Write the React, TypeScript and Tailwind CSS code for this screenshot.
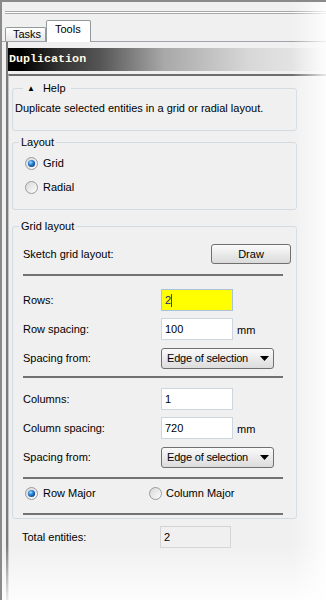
import React from "react"

function Radio({ checked }: { checked?: boolean }) {
  return (
    <svg width="13" height="13" viewBox="0 0 13 13" className="shrink-0">
      <defs>
        <linearGradient id="radioFill" x1="0" y1="0" x2="1" y2="1">
          <stop offset="0" stopColor="#d6d6d6" />
          <stop offset="1" stopColor="#ffffff" />
        </linearGradient>
        <radialGradient id="radioDot" cx="0.38" cy="0.35" r="0.7">
          <stop offset="0" stopColor="#a6dcff" />
          <stop offset="0.45" stopColor="#2f86d8" />
          <stop offset="1" stopColor="#0c3f86" />
        </radialGradient>
      </defs>
      <circle cx="6.5" cy="6.5" r="6" fill="url(#radioFill)" stroke="#9a9a9a" />
      {checked && <circle cx="6.5" cy="6.5" r="3.6" fill="url(#radioDot)" />}
    </svg>
  )
}

function Arrow() {
  return (
    <svg width="9" height="5" viewBox="0 0 9 5">
      <polygon points="0,0 9,0 4.5,5" fill="#000" />
    </svg>
  )
}

function Select() {
  return (
    <div className="w-[113px] h-[21px] rounded-[3px] border border-[#707070] bg-linear-to-b from-[#fafafa] to-[#dcdcdc] flex items-center justify-between pl-[5px] pr-[4px]">
      <span className="tracking-[-0.2px]">Edge of selection</span>
      <Arrow />
    </div>
  )
}

function TextBox({ value, yellow }: { value: string; yellow?: boolean }) {
  return (
    <div
      className={
        yellow
          ? "w-[72px] h-[22px] border border-[#aac3dc] bg-[#ffff00] flex items-center pl-[3px]"
          : "w-[72px] h-[22px] border border-[#cdd6df] bg-white flex items-center pl-[3px]"
      }
    >
      {yellow ? (
        <span className="flex items-center text-[#1b1b80]">
          {value}
          <span className="w-px h-[13px] bg-[#2040c0]" />
        </span>
      ) : (
        value
      )}
    </div>
  )
}

function Row({ label, children }: { label: string; children: React.ReactNode }) {
  return (
    <div className="flex items-center h-[22px]">
      <span className="w-[138px]">{label}</span>
      {children}
    </div>
  )
}

const Sep = () => <div className="w-[260px] h-[2px] bg-[#727272]" />

export default function App() {
  return (
    <div className="relative w-[326px] h-[600px] overflow-hidden bg-[#f0f0f0] border-l-2 border-t-2 border-[#8a8a8a] flex flex-col text-[11px] leading-[13px] text-black font-['Liberation_Sans',Arial,sans-serif]">
      {/* tab strip */}
      <div className="h-[40px] flex flex-col border-b border-[#a0a4a8]">
        <div className="ml-[3px] mt-[9px] h-[3px] border-y border-[#a8a8a8] bg-white" />
        <div className="flex-1" />
        <div className="flex items-end pl-[3px]">
          <div className="w-[41px] h-[14px] rounded-t-[2px] border border-b-0 border-[#919b9c] bg-linear-to-b from-white to-[#e6e6e6] flex items-center pl-[7px]">
            Tasks
          </div>
          <div className="w-[45px] h-[22px] -mb-px rounded-t-[2px] border border-b-0 border-[#919b9c] bg-white pl-[8px] pt-[2px]">
            Tools
          </div>
        </div>
      </div>

      {/* body */}
      <div className="flex-1 ml-[4px] border-l-2 border-[#7a7a7a] flex flex-col pt-[6px]">
        <div className="h-[23px] bg-[linear-gradient(to_right,#000_0%,#000_4%,#333_16%,#555_29%,#a8a8a8_49%,#d8d8d8_76%,#ececec_100%)] flex items-center pl-[1px]">
          <span className="font-['Liberation_Mono',monospace] font-bold text-[11.7px] text-[#fffbe6]">Duplication</span>
        </div>

        <div className="mt-[3px] flex-1 border-t-2 border-t-[#6e6e6e] border-l border-l-[#c4c4c4] flex flex-col">
          {/* Help */}
          <fieldset className="ml-[3px] mt-[6px] w-[285px] rounded-[3px] border border-[#d2dae2] pl-[2px] pt-[7px] pb-[15px]">
            <legend className="ml-[8px] pl-[4px] pr-[5px] flex items-center">
              <span className="text-[8px] leading-[13px]">▲</span>
              <span className="ml-[8px]">Help</span>
            </legend>
            <div>Duplicate selected entities in a grid or radial layout.</div>
          </fieldset>

          {/* Layout */}
          <fieldset className="ml-[3px] mt-[5px] w-[285px] rounded-[3px] border border-[#d2dae2] pl-[2px] pt-[2px] pb-[10px]">
            <legend className="ml-[4px] px-[2px]">Layout</legend>
            <div className="flex items-center gap-[5px] h-[24px] pl-[10px]">
              <Radio checked />
              <span>Grid</span>
            </div>
            <div className="flex items-center gap-[5px] h-[24px] pl-[10px]">
              <Radio />
              <span>Radial</span>
            </div>
          </fieldset>

          {/* Grid layout */}
          <fieldset className="ml-[3px] mt-[10px] w-[285px] rounded-[3px] border border-[#d2dae2] pl-[2px] pt-[10px] pb-[3px]">
            <legend className="ml-[4px] px-[2px]">Grid layout</legend>
            <div className="pl-[8px] flex flex-col">
              <div className="flex items-center h-[22px]">
                <span className="w-[188px]">Sketch grid layout:</span>
                <div className="w-[80px] h-[20px] rounded-[3px] border border-[#707070] bg-linear-to-b from-[#fbfbfb] to-[#dadada] flex items-center justify-center">
                  Draw
                </div>
              </div>
              <div className="mt-[9px]">
                <Sep />
              </div>

              <div className="mt-[13px] flex flex-col gap-[7px]">
                <Row label="Rows:">
                  <TextBox value="2" yellow />
                </Row>
                <Row label="Row spacing:">
                  <TextBox value="100" />
                  <span className="ml-[4px] mt-[3px]">mm</span>
                </Row>
                <Row label="Spacing from:">
                  <Select />
                </Row>
              </div>
              <div className="mt-[7px]">
                <Sep />
              </div>

              <div className="mt-[10px] flex flex-col gap-[7px]">
                <Row label="Columns:">
                  <TextBox value="1" />
                </Row>
                <Row label="Column spacing:">
                  <TextBox value="720" />
                  <span className="ml-[4px] mt-[3px]">mm</span>
                </Row>
                <Row label="Spacing from:">
                  <Select />
                </Row>
              </div>
              <div className="mt-[9px]">
                <Sep />
              </div>

              <div className="mt-[5px] h-[18px] flex items-center">
                <div className="w-[126px] flex items-center gap-[5px] pl-[2px]">
                  <Radio checked />
                  <span>Row Major</span>
                </div>
                <div className="flex items-center gap-[4px]">
                  <Radio />
                  <span>Column Major</span>
                </div>
              </div>
              <div className="mt-[11px]">
                <Sep />
              </div>
            </div>
          </fieldset>

          <div className="mt-[7px] pl-[13px] flex items-center h-[22px]">
            <span className="w-[138px]">Total entities:</span>
            <div className="w-[71px] h-[22px] border border-[#d4d4d4] bg-[#f0f0f0] flex items-center pl-[3px]">2</div>
          </div>
        </div>
      </div>

      {/* fading shadow at the right and bottom */}
      <div className="pointer-events-none absolute top-0 right-0 w-[34px] h-full bg-linear-to-r from-white/0 to-white/85" />
      <div className="pointer-events-none absolute bottom-0 left-0 w-full h-[55px] bg-linear-to-b from-white/0 to-white/85" />
    </div>
  )
}
